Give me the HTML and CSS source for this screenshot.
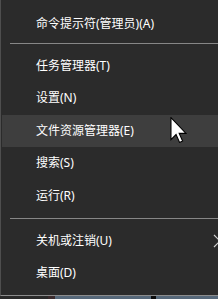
FILE: index.html
```html
<!DOCTYPE html>
<html lang="zh-CN">
<head>
<meta charset="utf-8">
<title>Win+X 菜单</title>
<link rel="stylesheet" href="styles.css">
</head>
<body>
<div class="screen">
  <div class="menu">
    <div class="item">命令提示符(管理员)(A)</div>
    <div class="sep sep-top"></div>
    <div class="item">任务管理器(T)</div>
    <div class="item">设置(N)</div>
    <div class="item hover">文件资源管理器(E)
      <svg class="cursor" width="17" height="26" viewBox="0 0 12 19" aria-hidden="true">
        <path d="M0.5 0.5 L0.5 16.5 L4.2 12.8 L6.8 18.6 L9 17.6 L6.5 12 L11.5 12 Z" fill="#ffffff" stroke="#000000" stroke-width="0.8" stroke-linejoin="miter"/>
      </svg>
    </div>
    <div class="item">搜索(S)</div>
    <div class="item">运行(R)</div>
    <div class="sep"></div>
    <div class="item">关机或注销(U)
      <svg class="chevron" width="8" height="14" viewBox="0 0 8 14" aria-hidden="true">
        <path d="M1 1 L7 7 L1 13" fill="none" stroke="#cfcfcf" stroke-width="1.2"/>
      </svg>
    </div>
    <div class="item">桌面(D)</div>
  </div>
  <div class="taskbar">
    <div class="tb tb-dark"></div>
    <div class="tb tb-red"></div>
    <div class="tb tb-blue tb-wide"></div>
    <div class="tb tb-black"></div>
    <div class="tb tb-blue tb-rest"></div>
  </div>
</div>
</body>
</html>
```
FILE: styles.css
```css
html, body {
  margin: 0;
  padding: 0;
  background: #2b2b2b;
}
.screen {
  width: 218px;
  height: 299px;
  overflow: hidden;
  display: flex;
  flex-direction: column;
}
.menu {
  height: 296px;
  box-sizing: border-box;
  background: #2b2b2b;
  border-left: 1px solid #4e4e4e;
  border-bottom: 1px solid #8c8c8c;
  padding-top: 8px;
  display: flex;
  flex-direction: column;
  font-family: "Noto Sans", "Noto Sans CJK SC", sans-serif;
  font-size: 12px;
  color: #ffffff;
}
.item {
  position: relative;
  height: 32.5px;
  line-height: 32.5px;
  padding-left: 34px;
  margin-left: 1px;
  white-space: nowrap;
  flex: none;
}
.item.hover {
  background: #3e3e3e;
}
.sep {
  flex: none;
  height: 1px;
  background: #878787;
  margin: 5.75px 0 5.75px 9px;
}
.sep-top {
  margin-top: 2.5px;
}
.cursor {
  position: absolute;
  left: 168px;
  top: 2px;
}
.chevron {
  position: absolute;
  right: -3px;
  top: 9.5px;
}
.taskbar {
  flex: 1;
  display: flex;
}
.tb {
  height: 100%;
}
.tb-dark { width: 48px; background: #2a2a2a; }
.tb-red { width: 7px; background: #3a2a2c; }
.tb-wide { width: 96px; }
.tb-blue { background: #56687a; }
.tb-black { width: 5px; background: #0a0a0a; }
.tb-rest { flex: 1; }
```
